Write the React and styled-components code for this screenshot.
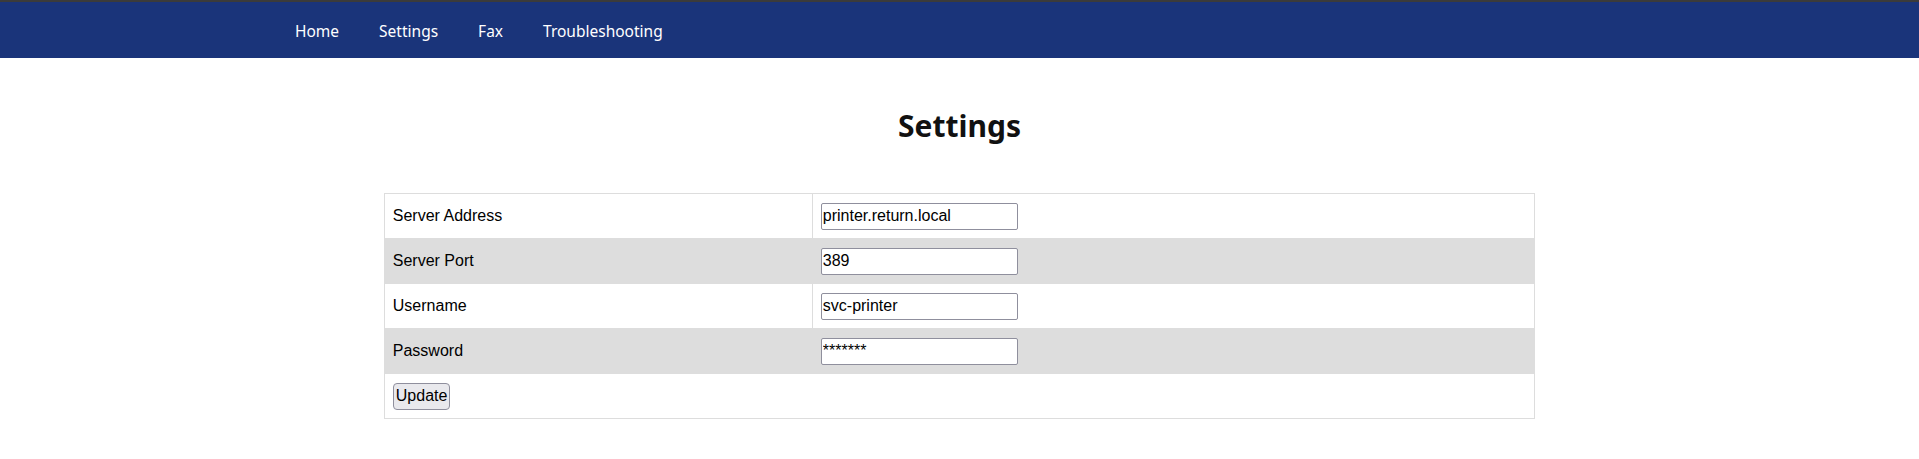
import React from "react";
import styled, { createGlobalStyle } from "styled-components";

const GlobalStyle = createGlobalStyle`
  body {
    margin: 0;
    background: #fff;
    font-family: "Liberation Sans", Arial, sans-serif;
  }
`;

const NavBar = styled.nav`
  height: 56px;
  border-top: 2px solid #3b3b3b;
  background-color: #1a347a;
  display: flex;
  align-items: center;
  padding-left: 295px;
  gap: 40px;
`;

const NavLink = styled.a`
  color: #fff;
  font-family: "Noto Sans", sans-serif;
  font-size: 15.5px;
  text-decoration: none;
  cursor: pointer;
  margin-top: 1px;
`;

const Title = styled.h1`
  margin: 48px 0 47px;
  text-align: center;
  font-family: "Noto Sans", sans-serif;
  font-size: 30px;
  line-height: 40px;
  font-weight: 700;
  color: #111;
`;

const Table = styled.table`
  width: 60%;
  margin: 0 auto;
  border-collapse: collapse;
  border: 1px solid #ddd;

  tr:nth-child(even) {
    background-color: #ddd;
  }
`;

const Row = styled.tr`
  height: 45px;
`;

const Cell = styled.td`
  border: 1px solid #ddd;
  padding: 0 8px;
  vertical-align: middle;
  font-size: 16px;
  color: #000;
  width: ${(p) => (p.$label ? "411px" : "auto")};
`;

const Input = styled.input`
  box-sizing: border-box;
  width: 197px;
  height: 27px;
  padding: 0 1px;
  border: 1px solid #8f8f9d;
  border-radius: 2px;
  font-family: "Liberation Sans", Arial, sans-serif;
  font-size: 16px;
  color: #000;
  background: #fff;
  display: block;
`;

const Button = styled.button`
  box-sizing: border-box;
  height: 27px;
  padding: 0 2px;
  border: 1px solid #8f8f9d;
  border-radius: 4px;
  background: #e9e9ed;
  font-family: "Liberation Sans", Arial, sans-serif;
  font-size: 16px;
  color: #000;
  display: block;
`;

const fields = [
  { label: "Server Address", value: "printer.return.local" },
  { label: "Server Port", value: "389" },
  { label: "Username", value: "svc-printer" },
  { label: "Password", value: "*******" },
];

export default function App() {
  return (
    <>
      <GlobalStyle />
      <NavBar>
        <NavLink>Home</NavLink>
        <NavLink>Settings</NavLink>
        <NavLink>Fax</NavLink>
        <NavLink>Troubleshooting</NavLink>
      </NavBar>
      <Title>Settings</Title>
      <Table>
        <tbody>
          {fields.map((f) => (
            <Row key={f.label}>
              <Cell $label>{f.label}</Cell>
              <Cell>
                <Input type="text" defaultValue={f.value} />
              </Cell>
            </Row>
          ))}
          <Row>
            <Cell colSpan={2}>
              <Button>Update</Button>
            </Cell>
          </Row>
        </tbody>
      </Table>
    </>
  );
}
